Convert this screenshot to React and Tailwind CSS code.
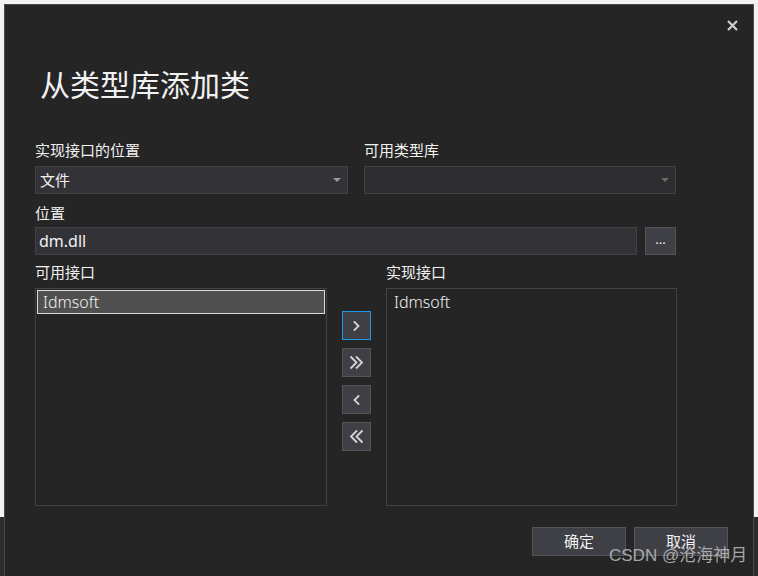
import React from "react";

const FONT = { fontFamily: '"Noto Sans", "Noto Sans CJK SC", sans-serif' };

function Chevron({ dir = "right", double = false }) {
  if (!double) {
    const pts = dir === "right" ? "1.5,1 5.5,5 1.5,9" : "5.5,1 1.5,5 5.5,9";
    return (
      <svg width="7" height="10" viewBox="0 0 7 10" fill="none">
        <polyline points={pts} stroke="#d6d6d6" strokeWidth="1.8" strokeLinecap="square" />
      </svg>
    );
  }
  const a = dir === "right" ? "1.5,1.5 7.5,7.5 1.5,13.5" : "13.5,1.5 7.5,7.5 13.5,13.5";
  const b = dir === "right" ? "7,1.5 13,7.5 7,13.5" : "8,1.5 2,7.5 8,13.5";
  return (
    <svg width="15" height="15" viewBox="0 0 15 15" fill="none">
      <polyline points={a} stroke="#d6d6d6" strokeWidth="1.8" />
      <polyline points={b} stroke="#d6d6d6" strokeWidth="1.8" />
    </svg>
  );
}

function ArrowBtn({ children, focused }) {
  return (
    <div
      className={
        "w-[29px] h-[29px] flex items-center justify-center bg-[#3f3f46] border " +
        (focused ? "border-[#1c97ea]" : "border-[#555558]")
      }
    >
      {children}
    </div>
  );
}

function Caret({ dim }) {
  return (
    <svg width="8" height="5" viewBox="0 0 8 5">
      <polygon points="0,0 8,0 4,4" fill={dim ? "#6a6a6a" : "#9a9a9a"} />
    </svg>
  );
}

export default function App() {
  return (
    <div
      className="w-[758px] h-[576px] overflow-hidden relative bg-[linear-gradient(to_bottom,#f2f2f2_0,#f2f2f2_517px,#2d2d30_517px)] pt-[4px] pl-[4px]"
      style={FONT}
    >
      <div className="w-[750px] h-[574px] bg-[#252526] border border-[#4a4a4d] flex flex-col text-[#f1f1f1]">
        {/* header */}
        <div className="h-[62px] flex justify-end pr-[15px] pt-[15px]">
          <svg width="11" height="11" viewBox="0 0 11 11">
            <path d="M1 1 L10 10 M10 1 L1 10" stroke="#d0d0d0" strokeWidth="2.2" />
          </svg>
        </div>
        {/* title */}
        <div className="pl-[35px] h-[36px] leading-[36px] text-[30px] text-[#f1f1f1]">从类型库添加类</div>

        <div className="pl-[30px] pr-[76px] mt-[37px] flex gap-[16px]">
          <div className="w-[313px] flex flex-col">
            <div className="h-[20px] leading-[20px] text-[15px]">实现接口的位置</div>
            <div className="mt-[6px] h-[28px] bg-[#333337] border border-[#434346] flex items-center justify-between pl-[4px] pr-[6px]">
              <span className="text-[15px]">文件</span>
              <Caret />
            </div>
          </div>
          <div className="w-[312px] flex flex-col">
            <div className="h-[20px] leading-[20px] text-[15px]">可用类型库</div>
            <div className="mt-[6px] h-[28px] bg-[#2d2d30] border border-[#434346] flex items-center justify-end pr-[6px]">
              <Caret dim />
            </div>
          </div>
        </div>

        <div className="pl-[30px] mt-[9px] h-[20px] leading-[20px] text-[15px]">位置</div>
        <div className="pl-[30px] mt-[4px] flex gap-[8px]">
          <div className="w-[602px] h-[28px] bg-[#333337] border border-[#434346] flex items-center pl-[3px] text-[16px]">
            dm.dll
          </div>
          <div className="w-[31px] h-[28px] bg-[#3f3f46] border border-[#555558] flex items-end justify-center text-[13px] leading-none pb-[8px]">
            ...
          </div>
        </div>

        <div className="pl-[30px] mt-[7px] flex">
          <div className="w-[292px] flex flex-col">
            <div className="h-[20px] leading-[20px] text-[15px]">可用接口</div>
            <div className="mt-[6px] h-[218px] border border-[#434346] p-[1px]">
              <div className="h-[24px] bg-[#505050] border border-[#d9d9d9] flex items-center pl-[5px] text-[16px] font-light">
                Idmsoft
              </div>
            </div>
          </div>
          <div className="ml-[15px] w-[29px] pt-[49px] flex flex-col gap-[8px]">
            <ArrowBtn focused>
              <Chevron dir="right" />
            </ArrowBtn>
            <ArrowBtn>
              <Chevron dir="right" double />
            </ArrowBtn>
            <ArrowBtn>
              <Chevron dir="left" />
            </ArrowBtn>
            <ArrowBtn>
              <Chevron dir="left" double />
            </ArrowBtn>
          </div>
          <div className="ml-[15px] w-[291px] flex flex-col">
            <div className="h-[20px] leading-[20px] text-[15px]">实现接口</div>
            <div className="mt-[6px] h-[218px] border border-[#434346] pl-[7px] pt-[1px]">
              <div className="h-[24px] flex items-center text-[16px] font-light">Idmsoft</div>
            </div>
          </div>
        </div>

        <div className="mt-[21px] flex justify-end gap-[8px] pr-[25px]">
          <div className="w-[94px] h-[29px] bg-[#3f3f46] border border-[#555558] flex items-center justify-center text-[15px]">
            确定
          </div>
          <div className="w-[94px] h-[29px] bg-[#3f3f46] border border-[#555558] flex items-center justify-center text-[15px]">
            取消
          </div>
        </div>
      </div>

      <div
        className="absolute left-[609px] top-[545px] text-[17px] leading-[22px] text-[#cfcfcf] opacity-75 whitespace-nowrap"
        style={{ fontFamily: '"Liberation Sans", "Noto Sans CJK SC", sans-serif' }}
      >
        CSDN @沧海神月
      </div>
    </div>
  );
}
